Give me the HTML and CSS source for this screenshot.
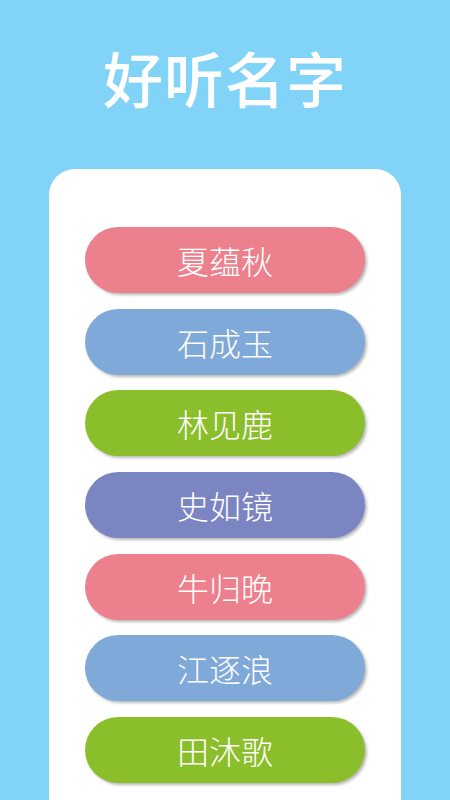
FILE: index.html
```html
<!DOCTYPE html>
<html lang="zh-CN">
<head>
<meta charset="utf-8">
<title>好听名字</title>
<link rel="stylesheet" href="styles.css">
</head>
<body>
<header class="header"><h1 class="title">好听名字</h1></header>
<main class="card">
  <div class="pill pink">夏蕴秋</div>
  <div class="pill blue">石成玉</div>
  <div class="pill green">林见鹿</div>
  <div class="pill purple">史如镜</div>
  <div class="pill pink">牛归晚</div>
  <div class="pill blue">江逐浪</div>
  <div class="pill green">田沐歌</div>
</main>
</body>
</html>
```
FILE: styles.css
```css
html, body {
  margin: 0;
  padding: 0;
  height: 800px;
  overflow: hidden;
}
body {
  background: #81d3f8;
  font-family: "Noto Sans CJK SC", "Noto Sans", sans-serif;
}
.header {
  padding-top: 37px;
  height: 132px;
  box-sizing: content-box;
  display: flex;
  justify-content: center;
}
.title {
  margin: 0;
  color: #ffffff;
  font-size: 60px;
  font-weight: 500;
  line-height: 80px;
  letter-spacing: 1px;
}
.card {
  margin: 0 49px;
  background: #ffffff;
  border-radius: 26px 26px 0 0;
  padding-top: 58px;
  height: 631px;
  box-sizing: border-box;
  display: flex;
  flex-direction: column;
  align-items: center;
  gap: 15.7px;
}
.pill {
  width: 280px;
  height: 66px;
  flex: none;
  border-radius: 33px;
  color: #ffffff;
  font-size: 32px;
  font-weight: 300;
  line-height: 66px;
  text-align: center;
  box-shadow: 2px 2px 3px rgba(0, 0, 0, 0.28);
}
.pink { background: #ec808d; }
.blue { background: #7fa9d8; }
.green { background: #8bbe2b; }
.purple { background: #7b85c2; }
```
